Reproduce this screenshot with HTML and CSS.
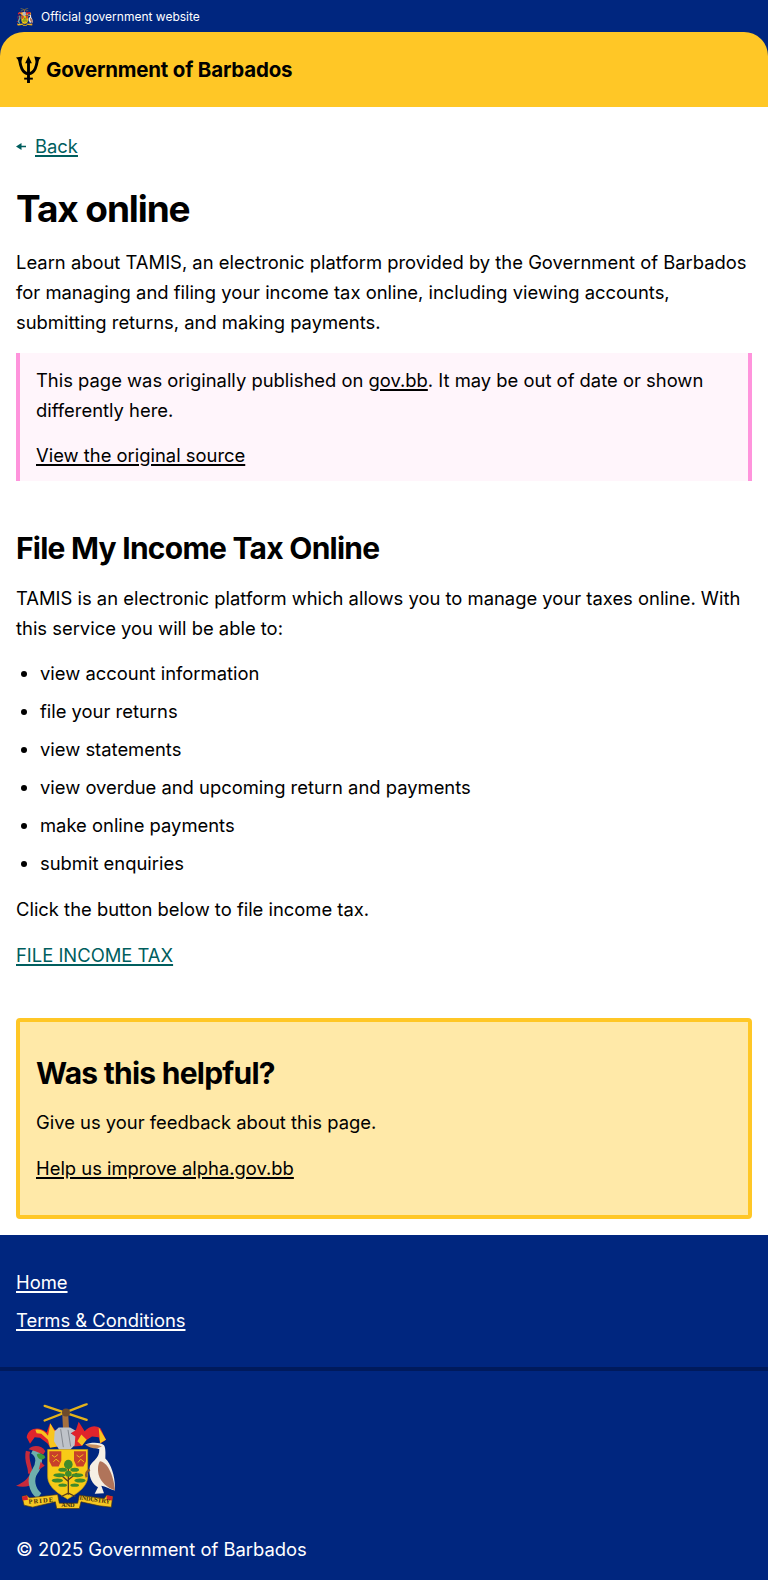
FILE: index.html
```html
<!DOCTYPE html>
<html lang="en">
<head>
<meta charset="utf-8">
<title>Tax online</title>
<link rel="stylesheet" href="styles.css">
</head>
<body>
<svg class="defs" width="0" height="0" aria-hidden="true">
  <symbol id="crest" viewBox="50 70 300 320">
    <g fill="none" stroke-linecap="round">
      <path d="M136 78 262 120M262 73 136 122" stroke="#e3b21c" stroke-width="7"/>
      <path d="M198 108 200 145" stroke="#a5703f" stroke-width="18"/>
      <circle cx="200" cy="98" r="12" fill="#6d4a2c" stroke="none"/>
    </g>
    <path d="M82 172C86 146 118 136 142 158L152 130 166 150 184 158 172 174 178 200 152 202 144 190 122 174 106 172 92 192Z" fill="#e0242c"/>
    <path d="M108 150C124 146 136 154 146 168L153 130 165 152 182 160 170 176 174 200 152 204 146 180 126 162 112 160Z" fill="#f7c51f"/>
    <path d="M304 146C284 132 268 142 256 154L238 126 230 150 214 158 224 172 224 200 248 198 256 184 278 170 298 172 304 190 320 180Z" fill="#e0242c"/>
    <path d="M298 142 320 180 302 190ZM246 164 262 180 248 198 234 184Z" fill="#f7c51f"/>
    <path d="M166 154 178 143 212 143 228 152 214 160 228 170 226 196 206 216 182 214 164 184Z" fill="#bfc3c9"/>
    <path d="M184 148 192 202M206 150 214 200" stroke="#868a91" stroke-width="3" fill="none"/>
    <path d="M145 209H265V290C265 325 225 345 205 358 185 345 145 325 145 290Z" fill="#f8cb17" stroke="#c79a12" stroke-width="2"/>
    <path d="M150 214H186V242L178 260 158 260 150 244ZM224 214H260V244L252 260 232 260 224 242Z" fill="#c8402a"/>
    <path d="M158 226 166 232 176 224M162 246 170 238 180 246M232 226 240 232 252 224M236 248 244 238 254 246" stroke="#f2b81a" stroke-width="3" fill="none"/>
    <path d="M207 245 207 345M207 305 184 285M207 300 232 280M207 340 186 350M207 340 228 350" stroke="#5a3d1c" stroke-width="4" fill="none"/>
    <g fill="#3f8a2b">
      <ellipse cx="207" cy="254" rx="13" ry="14"/>
      <ellipse cx="190" cy="270" rx="13" ry="6"/>
      <ellipse cx="226" cy="270" rx="13" ry="6"/>
      <ellipse cx="180" cy="286" rx="18" ry="6"/>
      <ellipse cx="234" cy="286" rx="18" ry="6"/>
      <ellipse cx="174" cy="302" rx="17" ry="6"/>
      <ellipse cx="242" cy="302" rx="17" ry="6"/>
      <ellipse cx="207" cy="282" rx="10" ry="9"/>
      <ellipse cx="190" cy="316" rx="13" ry="5"/>
      <ellipse cx="226" cy="316" rx="13" ry="5"/>
    </g>
    <path d="M86 214C78 245 96 262 92 282" fill="none" stroke="#c72a3a" stroke-width="13"/>
    <path d="M92 282C84 300 70 310 50 318 72 324 94 320 104 308Z" fill="#c72a3a"/>
    <path d="M100 212C126 226 120 256 106 276 92 296 96 330 120 348" fill="none" stroke="#6fb0ac" stroke-width="20"/>
    <path d="M88 208C100 194 128 196 138 214L132 224 108 214Z" fill="#c72a3a"/>
    <path d="M112 224C120 218 132 222 138 232 130 244 116 240 112 224Z" fill="#3c9a3a"/>
    <path d="M124 246 136 258 118 270Z" fill="#c72a3a"/>
    <path d="M258 194C272 188 300 186 314 196 320 205 318 225 318 236 338 255 350 300 346 332 330 328 318 320 306 318L314 340 286 342 296 322C276 312 266 285 272 258 282 240 300 236 300 208 288 203 270 202 258 194Z" fill="#f5efe4"/>
    <path d="M258 194C272 192 295 193 308 200L292 206C280 206 266 202 258 194Z" fill="#c98f5e"/>
    <path d="M302 244C322 246 342 280 347 332 324 324 304 308 298 285 294 268 296 252 302 244Z" fill="#b0745a"/>
    <path d="M272 270C262 272 258 284 262 292" stroke="#8a5a32" stroke-width="7" fill="none"/>
    <path d="M68 350 82 346 90 354 175 344 180 370 235 370 240 346 315 356 322 346 340 350 336 382 300 378 245 366 240 386 172 386 168 366 100 382 74 376Z" fill="#f6c722" stroke="#4a3510" stroke-width="2"/>
    <path d="M68 350 84 348 86 360 70 362ZM322 346 340 350 338 362 322 360Z" fill="#d3232c"/>
  </symbol>
</svg>

<div class="topbar">
  <svg class="crest-small" aria-hidden="true"><use href="#crest"/></svg>
  <span>Official government website</span>
</div>

<header class="masthead">
  <svg class="trident" viewBox="0 0 26 28" aria-hidden="true">
    <path class="trident-fill" d="M13 0 16.500 7.500H9.500ZM0 1.500 7 .6 5 7.500ZM26 1.500 19 .6 21 7.500Z"/>
    <path class="trident-line" d="M13 4V28M3.500 3C4.500 9 5.500 17.500 13 18.500 20.500 17.500 21.500 9 22.500 3"/>
    <path class="trident-bar" d="M8.500 23.500H17.500"/>
  </svg>
  <a class="brand" href="#">Government of Barbados</a>
</header>

<main class="content">
  <a class="back" href="#"><svg class="back-arrow" viewBox="0 0 10 7" aria-hidden="true"><path d="M0 3.500 5.500 0V2.700H10V4.300H5.500V7Z"/></svg><span class="link-text">Back</span></a>
  <h1>Tax online</h1>
  <p>Learn about TAMIS, an electronic platform provided by the Government of Barbados for managing and filing your income tax online, including viewing accounts, submitting returns, and making payments.</p>

  <aside class="notice">
    <p>This page was originally published on <a href="#">gov.bb</a>. It may be out of date or shown differently here.</p>
    <p><a href="#">View the original source</a></p>
  </aside>

  <h2>File My Income Tax Online</h2>
  <p class="lead-in">TAMIS is an electronic platform which allows you to manage your taxes online. With this service you will be able to:</p>
  <ul>
    <li>view account information</li>
    <li>file your returns</li>
    <li>view statements</li>
    <li>view overdue and upcoming return and payments</li>
    <li>make online payments</li>
    <li>submit enquiries</li>
  </ul>
  <p>Click the button below to file income tax.</p>
  <p><a class="teal" href="#">FILE INCOME TAX</a></p>

  <section class="feedback">
    <h2>Was this helpful?</h2>
    <p>Give us your feedback about this page.</p>
    <p><a href="#">Help us improve alpha.gov.bb</a></p>
  </section>
</main>

<footer class="footer">
  <nav class="footer-nav">
    <a href="#">Home</a>
    <a href="#">Terms &amp; Conditions</a>
  </nav>
  <div class="footer-base">
    <svg class="crest-large" viewBox="50 70 300 320" role="img" aria-label="Coat of arms of Barbados">
      <use href="#crest" x="50" y="70" width="300" height="320"/>
      <text class="crest-text" x="88" y="372" textLength="74" transform="rotate(-5 88 372)">PRIDE</text>
      <text class="crest-text" x="186" y="383" textLength="40">AND</text>
      <text class="crest-text" x="240" y="359" textLength="92" transform="rotate(8 240 359)">INDUSTRY</text>
    </svg>
    <p>© 2025 Government of Barbados</p>
  </div>
</footer>
</body>
</html>
```

FILE: styles.css
```css
* { box-sizing: border-box; }

html, body { margin: 0; padding: 0; }

body {
  background: #00267f;
  color: #000;
  font-family: Inter, "Liberation Sans", sans-serif;
  font-size: 18.4px;
  line-height: 30px;
}

.defs { position: absolute; }

.crest-text {
  font-family: "Liberation Serif", serif;
  font-size: 19px;
  font-weight: 700;
  fill: #3a2a0c;
}

.topbar {
  height: 32px;
  padding: 1px 16px 0;
  display: flex;
  align-items: center;
  gap: 8px;
  color: #fff;
  font-size: 12px;
  line-height: 16px;
}

.crest-small { width: 17px; height: 18px; flex: none; }

.masthead {
  height: 75px;
  padding: 0 16px;
  display: flex;
  align-items: center;
  gap: 5px;
  background: #ffc726;
  border-radius: 24px 24px 0 0;
}

.trident { width: 25px; height: 27px; flex: none; }
.trident-fill { fill: #000; }
.trident-line { fill: none; stroke: #000; stroke-width: 3; }
.trident-bar { fill: none; stroke: #000; stroke-width: 2; }

.brand {
  font-family: Inter, sans-serif;
  font-size: 20.5px;
  font-weight: 700;
  line-height: 28px;
  letter-spacing: -.2px;
  color: #000;
  text-decoration: none;
}

.content {
  background: #fff;
  padding: 24px 16px 16px;
}

a {
  color: inherit;
  text-decoration-thickness: 2px;
  text-underline-offset: 2px;
}

.back {
  display: flex;
  align-items: center;
  gap: 9px;
  color: #005e5e;
  text-decoration: none;
}

.back-arrow { width: 10px; height: 7px; fill: currentColor; flex: none; }
.link-text {
  text-decoration: underline;
  text-decoration-thickness: 2px;
  text-underline-offset: 2px;
}

h1 {
  margin: 26px 0 16px;
  font-size: 37px;
  line-height: 44px;
  font-weight: 700;
  letter-spacing: -1.1px;
}

h2 {
  margin: 0 0 16px;
  font-size: 30px;
  line-height: 38px;
  font-weight: 700;
  letter-spacing: -.75px;
}

p { margin: 0 0 16px; }

.lead-in { margin-bottom: 15px; }

.notice {
  background: #fff5fb;
  border-left: 4px solid #ff94dc;
  border-right: 4px solid #ff94dc;
  padding: 12px 16px 11px;
  margin: 16px 0 48px;
}

.notice p { margin-bottom: 15px; }
.notice p:last-child { margin-bottom: 0; }

ul { margin: 0 0 16px; padding: 0 0 0 24px; }
li { margin-bottom: 8px; }
li:last-child { margin-bottom: 0; }

.teal { color: #005e5e; }

.feedback {
  margin-top: 48px;
  background: #ffe9a8;
  border: 4px solid #ffc726;
  border-radius: 4px;
  padding: 16px;
}

.feedback h2 { margin: 16px 0 15px; }

.footer { background: #00267f; color: #fff; }

.footer-nav {
  display: flex;
  flex-direction: column;
  align-items: flex-start;
  gap: 8px;
  padding: 32px 16px;
  border-bottom: 4px solid #001a5c;
}

.footer-base { padding: 32px 16px 16px; }

.crest-large { display: block; width: 100px; height: 107px; margin-bottom: 24px; }

.footer-base p { margin: 0; }
```
